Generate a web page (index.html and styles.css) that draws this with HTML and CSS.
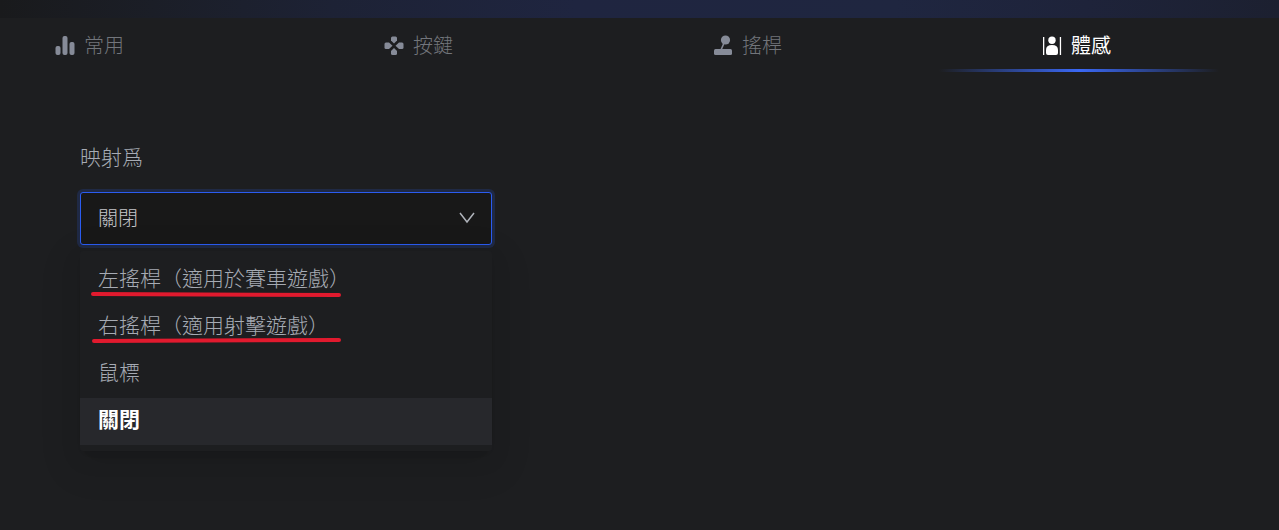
FILE: index.html
```html
<!DOCTYPE html>
<html lang="zh-Hant">
<head>
    <meta charset="UTF-8">
    <meta name="viewport" content="width=device-width, initial-scale=1.0">
    <title>體感</title>
    <link rel="stylesheet" href="styles.css">
</head>
<body>
    <div class="banner"></div>
    <nav class="tabs">
        <button class="tab">
            <svg class="tab-icon" viewBox="0 0 20 20">
                <rect x="0.5" y="11" width="5" height="9" rx="2"/>
                <rect x="7.5" y="1" width="5" height="19" rx="2"/>
                <rect x="14.5" y="7" width="5" height="13" rx="2"/>
            </svg>
            常用
        </button>
        <button class="tab">
            <svg class="tab-icon" viewBox="0 0 20 20">
                <path d="M8.500 1.500h3q1.500 0 1.500 1.500v2.500L10 8.500 7 5.500V3q0-1.500 1.500-1.500z"/>
                <path d="M8.500 20h3q1.500 0 1.500-1.500V16l-3-3-3 3v2.500q0 1.500 1.500 1.500z"/>
                <path d="M2 7.500h3l3.500 3.200L5 14H2q-1.500 0-1.500-1.500V9q0-1.500 1.500-1.500z"/>
                <path d="M18 7.500h-3l-3.500 3.200L15 14h3q1.500 0 1.500-1.500V9q0-1.500-1.500-1.500z"/>
            </svg>
            按鍵
        </button>
        <button class="tab">
            <svg class="tab-icon" viewBox="0 0 20 20">
                <circle cx="12.500" cy="5" r="4.600"/>
                <path d="M11 8L8 15" stroke="currentColor" stroke-width="1.600"/>
                <rect x="1" y="14" width="18" height="6" rx="1.500"/>
            </svg>
            搖桿
        </button>
        <button class="tab active">
            <svg class="tab-icon" viewBox="0 0 20 20">
                <rect x="1" y="2" width="1.300" height="18"/>
                <rect x="17.800" y="2" width="1.300" height="18"/>
                <circle cx="10" cy="5.300" r="3.700"/>
                <path d="M4 18v-3q0-5 6-5t6 5v3q0 2-2 2H6q-2 0-2-2z"/>
            </svg>
            體感
        </button>
    </nav>
    <main class="panel">
        <label class="field-label" for="mapping">映射爲</label>
        <div class="select-box">
            <select class="select" id="mapping">
                <option>左搖桿（適用於賽車遊戲）</option>
                <option>右搖桿（適用射擊遊戲）</option>
                <option>鼠標</option>
                <option selected>關閉</option>
            </select>
            <svg class="arrow" viewBox="0 0 16 12">
                <path d="M1 1l7 9 7-9"/>
            </svg>
            <ul class="menu">
                <li><button class="item">左搖桿（適用於賽車遊戲）</button></li>
                <li><button class="item">右搖桿（適用射擊遊戲）</button></li>
                <li><button class="item">鼠標</button></li>
                <li><button class="item selected">關閉</button></li>
            </ul>
            <svg class="marks" viewBox="0 0 252 54">
                <path d="M3 4L249 5"/>
                <path d="M4 51L249 50"/>
            </svg>
        </div>
    </main>
    <script>
        const select = document.getElementById('mapping');
        const items = document.querySelectorAll('.item');

        items.forEach((item, index) => {
            item.onclick = () => {
                select.selectedIndex = index;
                items.forEach(other => other.classList.remove('selected'));
                item.classList.add('selected');
            };
        });
    </script>
</body>
</html>
```
FILE: styles.css
```css
* {
    box-sizing: border-box;
}
body {
    margin: 0;
    min-height: 100vh;
    background-color: #1d1e20;
    color: #a6abb4;
    font-family: "Noto Sans CJK TC", sans-serif;
    font-size: 20px;
    font-weight: 300;
    line-height: 28px;
}
button, select {
    font: inherit;
    color: inherit;
    border: none;
    background: none;
    cursor: pointer;
}
.banner {
    height: 18px;
    background: linear-gradient(90deg, #191a1c 0%, #1b1e27 12%, #1d2235 26%, #1f2540 45%, #1f2640 70%, #1e233a 85%, #1c2030 100%);
}
.tabs {
    display: flex;
    justify-content: space-between;
    padding: 0 168px 0 55px;
}
.tab {
    position: relative;
    display: flex;
    align-items: center;
    gap: 9px;
    height: 54px;
    padding: 0;
    color: #72757b;
}
.tab-icon {
    width: 20px;
    height: 20px;
    color: #868b98;
    fill: currentColor;
}
.active, .active .tab-icon {
    color: #fff;
}
.active {
    font-weight: 400;
}
.active::after {
    content: "";
    position: absolute;
    left: 50%;
    bottom: 0;
    width: 280px;
    height: 3px;
    margin-left: -138px;
    background: linear-gradient(90deg, transparent, #3a68f5, transparent);
}
.panel {
    padding: 70px 80px;
}
.field-label {
    display: block;
    margin-bottom: 22px;
}
.field-label, .item {
    font-size: 21px;
}
.select-box {
    position: relative;
    max-width: 412px;
}
.select {
    display: block;
    appearance: none;
    width: 100%;
    height: 53px;
    padding: 0 17px 2px;
    border: 1px solid #2b5cf0;
    border-radius: 3px;
    outline: none;
    background-color: #181818;
    color: #c4c6ca;
    box-shadow: 0 0 0 3px #1f2944;
}
.arrow {
    position: absolute;
    right: 17px;
    top: 20px;
    width: 16px;
    height: 12px;
    fill: none;
    stroke: #b0b4bb;
    stroke-width: 1.5;
    pointer-events: none;
}
.menu {
    position: absolute;
    top: 59px;
    left: 0;
    width: 100%;
    margin: 0;
    padding: 6px 0;
    list-style: none;
    border-radius: 3px;
    background-color: #1d1e20;
    box-shadow: 0 4px 8px -5px rgba(0, 0, 0, 0.12), 0 8px 22px rgba(0, 0, 0, 0.08), 0 12px 38px 11px rgba(0, 0, 0, 0.05);
}
.item {
    display: block;
    width: 100%;
    height: 47px;
    padding: 0 18px 7px;
    text-align: left;
}
.selected {
    background-color: #27282c;
    color: #fff;
    font-weight: bold;
}
.marks {
    position: absolute;
    top: 98px;
    left: 10px;
    width: 252px;
    height: 54px;
    fill: none;
    stroke: #e11a2e;
    stroke-width: 4;
    stroke-linecap: round;
    pointer-events: none;
}
```
